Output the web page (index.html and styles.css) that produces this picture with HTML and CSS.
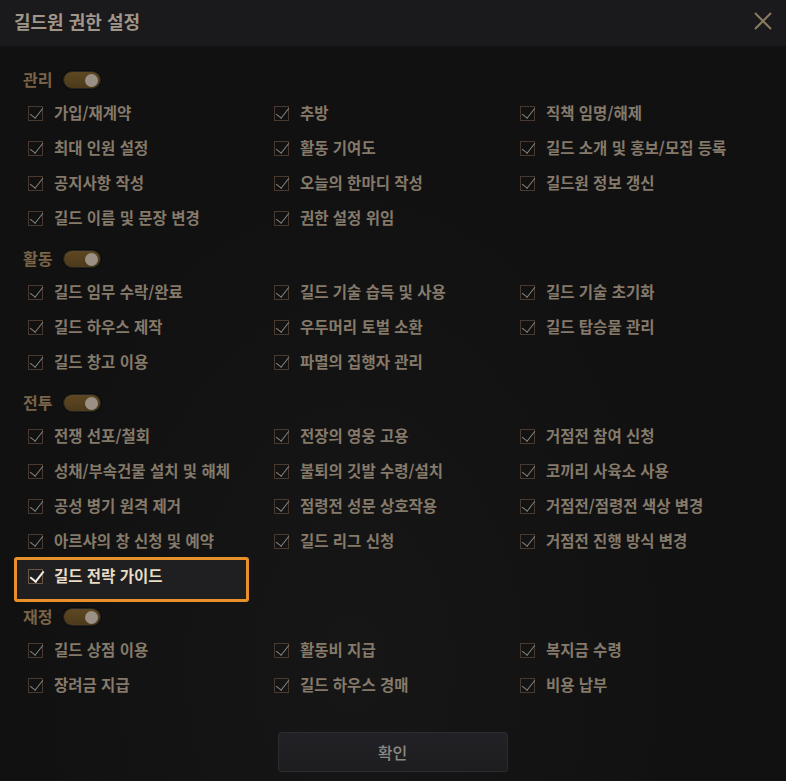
FILE: index.html
```html
<!DOCTYPE html>
<html lang="ko">
<head>
<meta charset="utf-8">
<title>길드원 권한 설정</title>
<link rel="stylesheet" href="styles.css">
</head>
<body>
<div class="dialog">
  <header class="titlebar">
    <h1 class="title">길드원 권한 설정</h1>
    <button class="close" aria-label="닫기">
      <svg width="20" height="20" viewBox="0 0 20 20"><path d="M2 2 L18 18 M18 2 L2 18" stroke="#8b7b5f" stroke-width="2" fill="none"/></svg>
    </button>
  </header>

  <main class="content">
    <section class="group">
      <div class="group-head"><span class="label">관리</span><span class="toggle"><span class="knob"></span></span></div>
      <div class="grid">
        <div class="item"><span class="box"></span>가입/재계약</div>
        <div class="item"><span class="box"></span>추방</div>
        <div class="item"><span class="box"></span>직책 임명/해제</div>
        <div class="item"><span class="box"></span>최대 인원 설정</div>
        <div class="item"><span class="box"></span>활동 기여도</div>
        <div class="item"><span class="box"></span>길드 소개 및 홍보/모집 등록</div>
        <div class="item"><span class="box"></span>공지사항 작성</div>
        <div class="item"><span class="box"></span>오늘의 한마디 작성</div>
        <div class="item"><span class="box"></span>길드원 정보 갱신</div>
        <div class="item"><span class="box"></span>길드 이름 및 문장 변경</div>
        <div class="item"><span class="box"></span>권한 설정 위임</div>
      </div>
    </section>

    <section class="group">
      <div class="group-head"><span class="label">활동</span><span class="toggle"><span class="knob"></span></span></div>
      <div class="grid">
        <div class="item"><span class="box"></span>길드 임무 수락/완료</div>
        <div class="item"><span class="box"></span>길드 기술 습득 및 사용</div>
        <div class="item"><span class="box"></span>길드 기술 초기화</div>
        <div class="item"><span class="box"></span>길드 하우스 제작</div>
        <div class="item"><span class="box"></span>우두머리 토벌 소환</div>
        <div class="item"><span class="box"></span>길드 탑승물 관리</div>
        <div class="item"><span class="box"></span>길드 창고 이용</div>
        <div class="item"><span class="box"></span>파멸의 집행자 관리</div>
      </div>
    </section>

    <section class="group">
      <div class="group-head"><span class="label">전투</span><span class="toggle"><span class="knob"></span></span></div>
      <div class="grid">
        <div class="item"><span class="box"></span>전쟁 선포/철회</div>
        <div class="item"><span class="box"></span>전장의 영웅 고용</div>
        <div class="item"><span class="box"></span>거점전 참여 신청</div>
        <div class="item"><span class="box"></span>성채/부속건물 설치 및 해체</div>
        <div class="item"><span class="box"></span>불퇴의 깃발 수령/설치</div>
        <div class="item"><span class="box"></span>코끼리 사육소 사용</div>
        <div class="item"><span class="box"></span>공성 병기 원격 제거</div>
        <div class="item"><span class="box"></span>점령전 성문 상호작용</div>
        <div class="item"><span class="box"></span>거점전/점령전 색상 변경</div>
        <div class="item"><span class="box"></span>아르샤의 창 신청 및 예약</div>
        <div class="item"><span class="box"></span>길드 리그 신청</div>
        <div class="item"><span class="box"></span>거점전 진행 방식 변경</div>
        <div class="item active"><span class="box"></span>길드 전략 가이드</div>
      </div>
    </section>

    <section class="group">
      <div class="group-head"><span class="label">재정</span><span class="toggle"><span class="knob"></span></span></div>
      <div class="grid">
        <div class="item"><span class="box"></span>길드 상점 이용</div>
        <div class="item"><span class="box"></span>활동비 지급</div>
        <div class="item"><span class="box"></span>복지금 수령</div>
        <div class="item"><span class="box"></span>장려금 지급</div>
        <div class="item"><span class="box"></span>길드 하우스 경매</div>
        <div class="item"><span class="box"></span>비용 납부</div>
      </div>
    </section>
  </main>

  <footer class="footer">
    <button class="confirm">확인</button>
  </footer>
</div>
</body>
</html>
```

FILE: styles.css
```css
* { box-sizing: border-box; }
html, body {
  margin: 0;
  padding: 0;
  background: #111112;
}
body {
  width: 786px;
  height: 781px;
  overflow: hidden;
  font-family: "Noto Sans CJK KR", "Noto Sans", sans-serif;
  color: #8b8070;
}
.dialog {
  width: 786px;
  height: 781px;
  display: flex;
  flex-direction: column;
  background: radial-gradient(ellipse at 45% 85%, #161616 0%, #111112 55%);
}
.titlebar {
  height: 46px;
  background: #1a1a1c;
  display: flex;
  align-items: center;
  justify-content: space-between;
  padding: 0 13px 0 14px;
}
.title {
  margin: 0;
  font-size: 18px;
  font-weight: 700;
  color: #a0968a;
  line-height: 1;
  padding-bottom: 4px;
}
.close {
  background: none;
  border: 0;
  padding: 0;
  width: 20px;
  height: 20px;
  margin-bottom: 4px;
  display: flex;
}
.content {
  padding: 18px 0 0 0;
  display: flex;
  flex-direction: column;
  gap: 9px;
}
.group-head {
  height: 30px;
  display: flex;
  align-items: center;
  padding-left: 23px;
  gap: 12px;
}
.label {
  font-size: 16px;
  font-weight: 700;
  color: #7a6447;
  line-height: 1;
  padding-bottom: 1px;
}
.toggle {
  position: relative;
  width: 36px;
  height: 16px;
  border-radius: 8px;
  background: linear-gradient(#5e4822, #4c3a1b);
  box-shadow: 0 0 0 1px #242424, 0 0 0 2px #0c0c0c;
  display: flex;
  align-items: center;
  justify-content: flex-end;
  padding-right: 2px;
  margin-top: 2px;
}
.knob {
  width: 13px;
  height: 13px;
  border-radius: 50%;
  background: #9a9086;
}
.grid {
  display: grid;
  grid-template-columns: 246px 246px 246px;
  padding-left: 28px;
}
.item {
  height: 35px;
  display: flex;
  align-items: center;
  gap: 11px;
  font-size: 15.5px;
  font-weight: 700;
  color: #857a6a;
  white-space: nowrap;
  position: relative;
  isolation: isolate;
}
.box {
  width: 15px;
  height: 15px;
  margin-top: 4px;
  border: 1px solid #4a392e;
  position: relative;
  flex: none;
}
.box::after {
  content: "";
  position: absolute;
  left: 4px;
  top: -2px;
  width: 6px;
  height: 12px;
  border-right: 1.8px solid #8a857e;
  border-bottom: 1.8px solid #8a857e;
  transform: rotate(38deg);
}
.item.active {
  color: #e8dcc4;
}
.item.active .box {
  border-color: #6a5644;
}
.item.active .box::after {
  border-color: #f3ede2;
  border-right-width: 2.2px;
  border-bottom-width: 2.2px;
}
.item.active::before {
  content: "";
  position: absolute;
  z-index: -1;
  left: -14px;
  top: 0;
  width: 229px;
  height: 39px;
  border: 3px solid #e8912b;
  border-radius: 3px;
  background: #1f1f22;
}
.footer {
  margin-top: auto;
  display: flex;
  justify-content: center;
  padding: 0 0 9px 0;
}
.confirm {
  width: 230px;
  height: 40px;
  margin-left: -1px;
  background: linear-gradient(#222226, #1d1d20);
  border: 1px solid #2b2b30;
  border-radius: 3px;
  font-family: "Noto Sans CJK KR", "Noto Sans", sans-serif;
  font-size: 16px;
  font-weight: 500;
  color: #8c8985;
}
```
